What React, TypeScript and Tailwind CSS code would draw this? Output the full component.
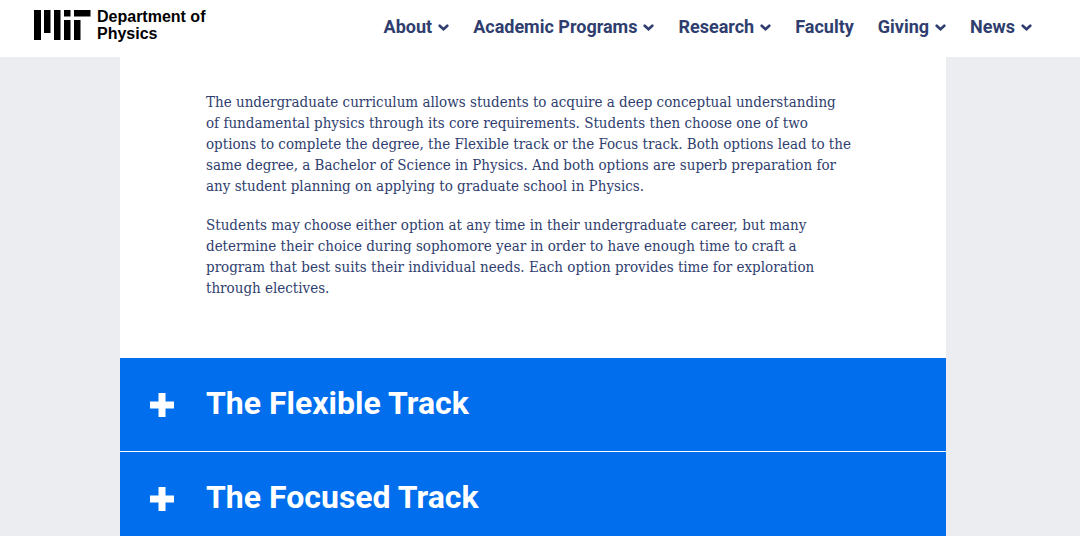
const navItems = [
  { label: 'About', menu: true },
  { label: 'Academic Programs', menu: true },
  { label: 'Research', menu: true },
  { label: 'Faculty', menu: false },
  { label: 'Giving', menu: true },
  { label: 'News', menu: true },
];

const tracks = ['The Flexible Track', 'The Focused Track'];

function Logo() {
  return (
    <a href="#" className="flex items-start gap-1.5 font-['Liberation_Sans',sans-serif] text-base font-bold leading-[17px] text-black">
      <svg width="57" height="30" viewBox="0 0 57 30" className="mt-0.5 shrink-0" fill="currentColor" aria-hidden="true">
        <path d="M0 0h7v30H0zM10 0h6.500v23H10zM20 0h6.500v30H20zM30 0h6.500v6.500H30zM30 10h6.500v20H30zM40 0h16.500v6.500H40zM40 10h6.500v20H40z" />
      </svg>
      <span>
        Department of
        <br />
        Physics
      </span>
    </a>
  );
}

function Chevron() {
  return (
    <svg width="11" height="8" viewBox="0 0 11 8" fill="none" stroke="currentColor" strokeWidth="2.6" className="mt-0.5" aria-hidden="true">
      <path d="M1.700 1.700 5.500 5.300 9.300 1.700" strokeLinecap="round" />
    </svg>
  );
}

function Plus() {
  return (
    <svg width="24" height="24" viewBox="0 0 24 24" className="mt-[3px] shrink-0" fill="currentColor" aria-hidden="true">
      <path d="M8.500 0h7v8.500H24v7h-8.500V24h-7v-8.500H0v-7h8.500z" />
    </svg>
  );
}

export default function App() {
  return (
    <div className="flex h-screen flex-col bg-[#ecedf1] font-['Roboto',sans-serif] text-[#2f3e6e]">
      <header className="flex h-[57px] shrink-0 items-start justify-between bg-white pl-[34px] pr-12 pt-2">
        <Logo />
        <nav aria-label="Main" className="flex gap-6 pt-[7px] text-lg font-bold leading-6">
          {navItems.map((item) =>
            item.menu ? (
              <button key={item.label} type="button" className="flex items-center gap-1.5">
                {item.label}
                <Chevron />
              </button>
            ) : (
              <a key={item.label} href="#">
                {item.label}
              </a>
            ),
          )}
        </nav>
      </header>

      <div className="min-h-0 flex-1 overflow-y-auto pr-[14px] [scrollbar-width:none]">
        <main className="mx-auto max-w-[826px] bg-white">
          <div className="space-y-[18px] pb-[59px] pl-[86px] pr-[95px] pt-[35px] font-['Roboto_Slab','DejaVu_Serif_Condensed','DejaVu_Serif',serif] text-[15px] leading-[21px]">
            <p>
              The undergraduate curriculum allows students to acquire a deep conceptual understanding of fundamental
              physics through its core requirements. Students then choose one of two options to complete the degree, the
              Flexible track or the Focus track. Both options lead to the same degree, a Bachelor of Science in Physics.
              And both options are superb preparation for any student planning on applying to graduate school in
              Physics.
            </p>
            <p>
              Students may choose either option at any time in their undergraduate career, but many determine their
              choice during sophomore year in order to have enough time to craft a program that best suits their
              individual needs. Each option provides time for exploration through electives.
            </p>
          </div>
          <div className="divide-y divide-white bg-[#006eed] text-white">
            {tracks.map((track) => (
              <h2 key={track} className="text-[32px] font-bold leading-[45px]">
                <button type="button" aria-expanded="false" className="flex w-full items-center gap-8 px-[30px] pb-[25px] pt-[23px] text-left">
                  <Plus />
                  {track}
                </button>
              </h2>
            ))}
          </div>
        </main>
      </div>
    </div>
  );
}
